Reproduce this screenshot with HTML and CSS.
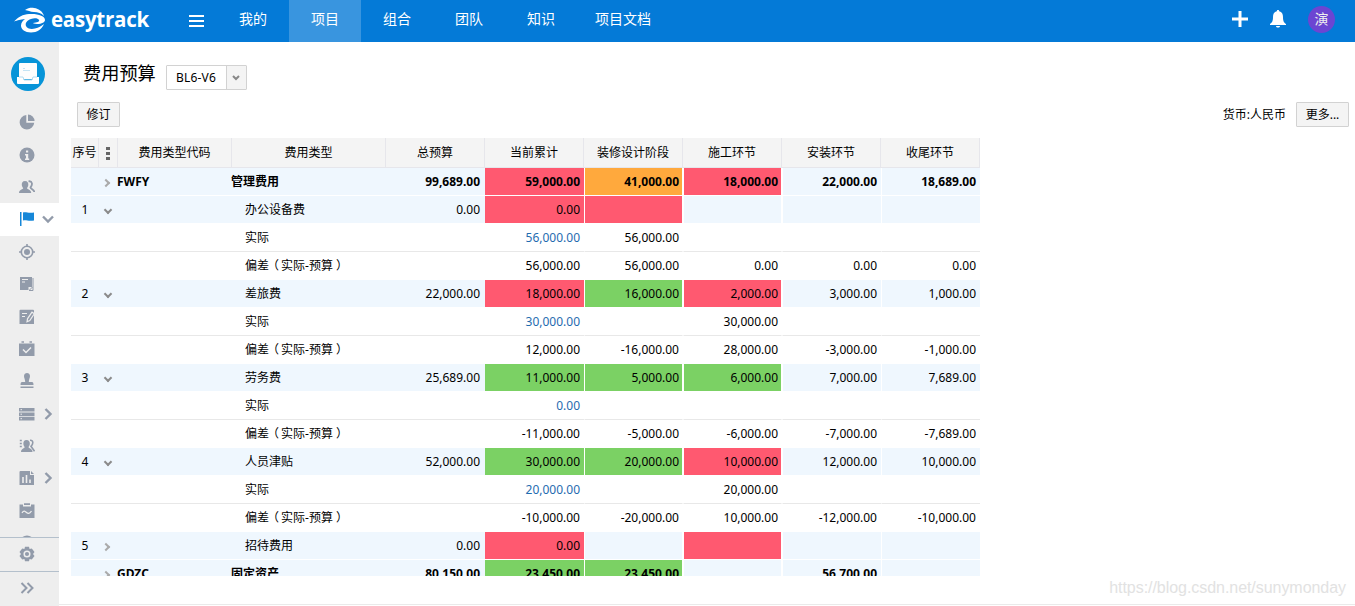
FILE: index.html
```html
<!DOCTYPE html>
<html lang="zh-CN">
<head>
  <meta charset="UTF-8">
  <meta name="viewport" content="width=device-width, initial-scale=1.0">
  <title>费用预算</title>
  <link rel="stylesheet" href="styles.css">
</head>
<body>
  <header class="topbar">
    <div class="logo">
      <svg width="33" height="26" viewBox="0 0 33 26" fill="#fff">
        <path d="M11 3C14 1 17 .6 20 1c5 .6 9 4 10 8-3-3-6-4-10-4-4-.2-6-1.500-9-2z"/>
        <path d="M0 14.500C4 10 9 7.300 15 7c9-.6 16 2 16 6 0 2-3 4-8 4-3 0-4-1-4-1 4-.3 7-1.500 6-3-1-2-5-2-8-1-4 1.500-6 4-5 7 1 2.500 5 3.500 9 2.500 4-.8 6-2.500 9-4.500-2 5-7 8.500-13 8.500-6 0-10-3-10-7 0-3 2-5 4-6.500-5 .3-7 1.500-11 2.500z"/>
      </svg>
      <span class="logo-text">easytrack</span>
    </div>
    <svg class="menu-icon" width="15" height="12" viewBox="0 0 15 12"><path d="M0 1h15M0 6h15M0 11h15" stroke="#fff" stroke-width="2"/></svg>
    <nav class="nav">
      <a href="#">我的</a>
      <a href="#" class="active">项目</a>
      <a href="#">组合</a>
      <a href="#">团队</a>
      <a href="#">知识</a>
      <a href="#" class="wide">项目文档</a>
    </nav>
    <div class="tools">
      <svg width="16" height="16" viewBox="0 0 16 16"><path d="M8 0v16M0 8h16" stroke="#fff" stroke-width="3"/></svg>
      <svg width="16" height="18" viewBox="0 0 16 18" fill="#fff"><path d="M8 0c1 0 1 .6 1.200 1.200C12 2 13 4 13 7c0 4 .8 5.500 3 7v1H0v-1c2.200-1.500 3-3 3-7 0-3 1-5 3.800-5.800C7 .6 7 0 8 0zM6 16h4c0 1.200-1 1.600-2 1.600s-2-.4-2-1.600z"/></svg>
      <span class="avatar">演</span>
    </div>
  </header>

  <div class="layout">
    <aside class="sidebar">
      <div class="project-icon">
        <svg width="22" height="22" viewBox="0 0 22 22">
          <path d="M3 0h16a1 1 0 0 1 1 1v15H2V1a1 1 0 0 1 1-1z" fill="#fdfdfd"/>
          <path d="M6 5.500h2M6 7.500h7" fill="none" stroke="#c5e4f4"/>
          <path d="M0 14h6l1 3h8l1-3h6v6a1 1 0 0 1-1 1H1a1 1 0 0 1-1-1z" fill="#fff"/>
          <path d="M2 14h4l1 3h8l1-3h4" fill="none" stroke="#b5dcf0"/>
        </svg>
      </div>
      <ul class="side-menu">
        <li><svg viewBox="0 0 16 16"><path d="M7.300 1v7.700h7.900A7.300 7.300 0 1 1 7.300 1z"/><path d="M9 .4A7 7 0 0 1 15.600 7H9z"/></svg></li>
        <li><svg viewBox="0 0 16 16"><circle cx="8" cy="8" r="7.500"/><path d="M7 3.500h2.200v2H7zM6 7h3.200v4.500h1V13H6v-1.500h1v-3H6z" fill="#eee"/></svg></li>
        <li><svg viewBox="0 0 16 16"><path d="M6 2c2.500 0 3.500 1.700 3.300 4-.1 1.500-.8 2.300-1.300 3 0 1.500 4.200 1.600 4.200 5H0c0-3.400 4.200-3.500 4.200-5C3.500 8.300 3 7.500 2.800 6 2.600 3.700 3.500 2 6 2z"/><path d="M9.500 2.300c4-.6 4.300 3.500 2 6 .2 1.900 3.500 2 3.800 4.700" fill="none" stroke="#929baa" stroke-width="1.800"/></svg></li>
        <li class="active"><svg viewBox="0 0 16 16"><path d="M1 1h1.500v14H1zM4 1.500c3-1.200 5 1.200 11 0v8c-6 1.200-8-1.200-11 0z"/></svg><svg class="arrow" viewBox="0 0 12 12"><path d="M1 3.500l5 5 5-5"/></svg></li>
        <li><svg viewBox="0 0 16 16"><circle cx="8" cy="8" r="5.700" fill="none" stroke="#929baa" stroke-width="1.600"/><circle cx="8" cy="8" r="3"/><path d="M7.200 0h1.600v3H7.200zM7.200 13h1.600v3H7.200zM0 7.200h3v1.600H0zM13 7.200h3v1.600h-3z"/></svg></li>
        <li><svg viewBox="0 0 16 16"><path d="M1 1h12v10H9.500v3H1z"/><path d="M14 2v12.500h-4M10.500 14l3-3" fill="none" stroke="#929baa"/><path d="M3 3.500h6M3 6h3" stroke="#eee" stroke-width="1.200"/></svg></li>
        <li><svg viewBox="0 0 16 16"><path d="M1.500.8h12.500a1 1 0 0 1 1 1V15H.5V1.800a1 1 0 0 1 1-1z"/><path d="M3 4.500h5M3 7.500h3" stroke="#eee" stroke-width="1.200"/><path d="M8 12.800l.5-3L13 3.200l2.300 1.600-4.500 6.700z" fill="#929baa" stroke="#eee" stroke-width="1.200"/></svg></li>
        <li><svg viewBox="0 0 16 16"><path d="M0 2.500h15.500V15H0zM2.500.3H5v1.400H2.500zM10.500.3H13v1.400h-2.500z"/><path d="M4 8.500l3 3 5-5" fill="none" stroke="#eee" stroke-width="1.500"/></svg></li>
        <li><svg viewBox="0 0 16 16"><path d="M5 3c0-4 6-4 6 0 0 2.500-1.200 3-1.200 6H13c1 0 1.500 1 1.500 3h-13c0-2 .5-3 1.500-3h3.200C6.200 6 5 5.500 5 3zM1.500 13.500h13V15h-13z"/></svg></li>
        <li><svg viewBox="0 0 16 16"><path d="M0 2h15.500v3.600H0zM0 6.400h15.500V10H0zM0 10.800h15.500v3.600H0z"/><path d="M1.500 3.700h1.500M1.500 8.200h1.500M1.500 12.700h1.500" stroke="#eee"/></svg><svg class="arrow" viewBox="0 0 12 12"><path d="M3.500 1l5 5-5 5"/></svg></li>
        <li><svg viewBox="0 0 16 16"><path d="M7.500 2c2.500 0 3.500 1.700 3.300 4-.1 1.500-.8 2.300-1.300 3 0 1.500 4 1.600 4 5H2c0-3.400 3.700-3.500 3.700-5-.6-.7-1.200-1.500-1.300-3C4.200 3.700 5 2 7.500 2z"/><path d="M11 2.300c3.500-.3 3.500 3.500 1 6l3.500 5M.8 2.500h2M.8 5.500h2M.8 8.500h2" fill="none" stroke="#929baa" stroke-width="1.600"/></svg></li>
        <li><svg viewBox="0 0 16 16"><path d="M1.500 1H11v4h4v10H.5V2a1 1 0 0 1 1-1zM12 1l3 3h-3z"/><path d="M4 7v6M7.500 5v8M11 9.500V13" stroke="#eee" stroke-width="1.600"/></svg><svg class="arrow" viewBox="0 0 12 12"><path d="M3.500 1l5 5-5 5"/></svg></li>
        <li><svg viewBox="0 0 16 16"><path d="M.5 1.500H4v2h8v-2h3.500V15H.5zM5 .3h6V2H5z"/><path d="M3 9.800c2-3 3.200-1.500 4.500-.3s2.700 1.800 5-1.500" fill="none" stroke="#eee" stroke-width="1.300"/></svg></li>
        <li><svg viewBox="0 0 16 16"><circle cx="8" cy="8" r="7.500"/></svg></li>
      </ul>
      <div class="side-foot">
        <svg viewBox="0 0 16 16"><path d="M6 .8h4l.6 2.200 2.200-.6L15.500 6 14 8l1.500 2-2.700 3.600-2.200-.6-.6 2.200H6L5.400 13l-2.200.6L.5 10 2 8 .5 6l2.700-3.600 2.200.6z"/><circle cx="8" cy="8" r="2.800" fill="#929baa" stroke="#eee" stroke-width="1.500"/></svg>
      </div>
      <div class="side-foot">
        <svg viewBox="0 0 16 16"><path d="M2.500 3l5 5-5 5M8.500 3l5 5-5 5" fill="none" stroke="#929baa" stroke-width="2"/></svg>
      </div>
    </aside>

    <main class="content">
      <div class="title-row">
        <h1>费用预算</h1>
        <div class="select">
          <span>BL6-V6</span>
          <i><svg width="8" height="6" viewBox="0 0 8 6"><path d="M1 1l3 3 3-3" fill="none" stroke="#888" stroke-width="2"/></svg></i>
        </div>
      </div>
      <div class="toolbar">
        <button class="btn">修订</button>
        <span class="currency">货币:人民币</span>
        <button class="btn more">更多...</button>
      </div>

      <div class="grid-wrap">
        <table class="grid">
          <colgroup>
            <col class="c-no"><col class="c-exp"><col class="c-code"><col class="c-type">
            <col class="c-num"><col class="c-num"><col class="c-num"><col class="c-num"><col class="c-num"><col class="c-num">
          </colgroup>
          <thead>
            <tr><th>序号</th><th><svg width="4" height="13" viewBox="0 0 4 13"><path d="M0 0h4v3H0zM0 5h4v3H0zM0 10h4v3H0z" fill="#666"/></svg></th><th>费用类型代码</th><th>费用类型</th><th>总预算</th><th>当前累计</th><th>装修设计阶段</th><th>施工环节</th><th>安装环节</th><th>收尾环节</th></tr>
          </thead>
          <tbody>
            <tr class="budget group"><td></td><td><i class="chev right"></i></td><td>FWFY</td><td>管理费用</td><td>99,689.00</td><td class="red">59,000.00</td><td class="orange">41,000.00</td><td class="red">18,000.00</td><td>22,000.00</td><td>18,689.00</td></tr>

            <tr class="budget"><td>1</td><td><i class="chev"></i></td><td></td><td>办公设备费</td><td>0.00</td><td class="red">0.00</td><td class="red"></td><td></td><td></td><td></td></tr>
            <tr class="actual"><td></td><td></td><td></td><td>实际</td><td></td><td><a href="#">56,000.00</a></td><td>56,000.00</td><td></td><td></td><td></td></tr>
            <tr><td></td><td></td><td></td><td>偏差<b class="open">（</b>实际-预算<b class="close">）</b></td><td></td><td>56,000.00</td><td>56,000.00</td><td>0.00</td><td>0.00</td><td>0.00</td></tr>

            <tr class="budget"><td>2</td><td><i class="chev"></i></td><td></td><td>差旅费</td><td>22,000.00</td><td class="red">18,000.00</td><td class="green">16,000.00</td><td class="red">2,000.00</td><td>3,000.00</td><td>1,000.00</td></tr>
            <tr class="actual"><td></td><td></td><td></td><td>实际</td><td></td><td><a href="#">30,000.00</a></td><td></td><td>30,000.00</td><td></td><td></td></tr>
            <tr><td></td><td></td><td></td><td>偏差<b class="open">（</b>实际-预算<b class="close">）</b></td><td></td><td>12,000.00</td><td>-16,000.00</td><td>28,000.00</td><td>-3,000.00</td><td>-1,000.00</td></tr>

            <tr class="budget"><td>3</td><td><i class="chev"></i></td><td></td><td>劳务费</td><td>25,689.00</td><td class="green">11,000.00</td><td class="green">5,000.00</td><td class="green">6,000.00</td><td>7,000.00</td><td>7,689.00</td></tr>
            <tr class="actual"><td></td><td></td><td></td><td>实际</td><td></td><td><a href="#">0.00</a></td><td></td><td></td><td></td><td></td></tr>
            <tr><td></td><td></td><td></td><td>偏差<b class="open">（</b>实际-预算<b class="close">）</b></td><td></td><td>-11,000.00</td><td>-5,000.00</td><td>-6,000.00</td><td>-7,000.00</td><td>-7,689.00</td></tr>

            <tr class="budget"><td>4</td><td><i class="chev"></i></td><td></td><td>人员津贴</td><td>52,000.00</td><td class="green">30,000.00</td><td class="green">20,000.00</td><td class="red">10,000.00</td><td>12,000.00</td><td>10,000.00</td></tr>
            <tr class="actual"><td></td><td></td><td></td><td>实际</td><td></td><td><a href="#">20,000.00</a></td><td></td><td>20,000.00</td><td></td><td></td></tr>
            <tr><td></td><td></td><td></td><td>偏差<b class="open">（</b>实际-预算<b class="close">）</b></td><td></td><td>-10,000.00</td><td>-20,000.00</td><td>10,000.00</td><td>-12,000.00</td><td>-10,000.00</td></tr>

            <tr class="budget"><td>5</td><td><i class="chev right"></i></td><td></td><td>招待费用</td><td>0.00</td><td class="red">0.00</td><td></td><td class="red"></td><td></td><td></td></tr>
            <tr class="budget group"><td></td><td><i class="chev right"></i></td><td>GDZC</td><td>固定资产</td><td>80,150.00</td><td class="green">23,450.00</td><td class="green">23,450.00</td><td></td><td>56,700.00</td><td></td></tr>
          </tbody>
        </table>
      </div>
      <div class="watermark">https://blog.csdn.net/sunymonday</div>
    </main>
  </div>
</body>
</html>
```
FILE: styles.css
```css
* {
  box-sizing: border-box;
}
body {
  margin: 0;
  height: 606px;
  overflow: hidden;
  font-family: "Noto Sans", "Noto Sans CJK SC", sans-serif;
  font-size: 12px;
  color: #000;
  background: #fff;
}
a {
  text-decoration: none;
}

/* top bar */
.topbar {
  display: flex;
  align-items: center;
  height: 42px;
  background: #047ad7;
  color: #fff;
}
.logo {
  display: flex;
  align-items: center;
  width: 188px;
  height: 42px;
  padding-left: 14px;
}
.logo svg {
  margin-top: -2px;
}
.logo-text {
  margin: -5px 0 0 4px;
  font-family: "Open Sans", sans-serif;
  font-size: 20.5px;
  font-weight: 700;
  letter-spacing: -0.25px;
  line-height: 30px;
}
.menu-icon {
  margin-left: 1px;
}
.nav {
  display: flex;
  margin-left: 13px;
}
.nav a {
  width: 72px;
  height: 42px;
  line-height: 38px;
  font-size: 14px;
  text-align: center;
  color: #fff;
}
.nav a.active {
  background: #3995df;
}
.nav a.wide {
  width: 92px;
}
.tools {
  display: flex;
  align-items: center;
  gap: 22px;
  margin: -4px 20px 0 auto;
}
.avatar {
  width: 27px;
  height: 27px;
  border-radius: 50%;
  background: #6c45d2;
  color: #eee;
  font-size: 14px;
  line-height: 26px;
  text-align: center;
}

/* left menu */
.layout {
  display: flex;
  height: 564px;
}
.sidebar {
  display: flex;
  flex-direction: column;
  width: 59px;
  background: #eee;
}
.sidebar svg {
  display: block;
  fill: #929baa;
}
.project-icon {
  display: flex;
  flex: none;
  align-items: center;
  justify-content: center;
  width: 34px;
  height: 34px;
  margin: 15px 0 15px 11px;
  border-radius: 50%;
  background: #0794d8;
}
.side-menu {
  flex: 1;
  min-height: 0;
  margin: 0;
  padding: 0;
  overflow: hidden;
  list-style: none;
}
.side-menu li {
  display: flex;
  align-items: center;
  height: 32.4px;
  padding-left: 19px;
}
.side-menu li.active {
  background: #fff;
}
.side-menu li.active svg:first-child {
  fill: #1787d8;
}
.side-menu svg,
.side-foot svg {
  width: 16px;
  height: 16px;
}
.side-menu svg.arrow {
  width: 12px;
  height: 12px;
  margin-left: 7px;
  fill: none;
  stroke: #929baa;
  stroke-width: 2.4;
}
.side-foot {
  display: flex;
  flex: none;
  align-items: center;
  height: 34px;
  padding: 0 0 2px 19px;
  border-top: 1px solid #b4c0cc;
}
.side-foot:last-child {
  height: 35px;
}

/* page */
.content {
  position: relative;
  flex: 1;
  height: 563px;
  border-bottom: 1px solid #eaeaea;
}
.title-row {
  display: flex;
  height: 60px;
  padding: 23px 0 0 24px;
}
h1 {
  width: 83px;
  margin: -5px 0 0;
  font-size: 18.2px;
  font-weight: normal;
  line-height: 26px;
}
.select {
  display: flex;
  width: 81px;
  height: 25px;
  border: 1px solid #d2d2d2;
  border-radius: 1px;
  line-height: 23px;
}
.select span {
  flex: 1;
  padding-left: 9px;
  letter-spacing: 0.2px;
}
.select i {
  display: flex;
  align-items: center;
  justify-content: center;
  width: 20px;
  padding-right: 1px;
  border-left: 1px solid #d2d2d2;
  background: #f4f4f4;
}
.toolbar {
  display: flex;
  align-items: center;
  height: 25px;
  padding: 0 6px 0 18px;
}
.btn {
  width: 43px;
  height: 25px;
  padding: 1px 0 0;
  border: 1px solid #d2d2d2;
  border-radius: 1px;
  background: #f4f4f4;
  font: inherit;
  line-height: 22px;
  color: #000;
}
.btn.more {
  width: 53px;
}
.currency {
  margin: -2px 10px 0 auto;
}

/* budget table */
.grid-wrap {
  width: 910px;
  height: 438px;
  margin: 11px 0 0 12px;
  overflow: hidden;
}
.grid {
  width: 909px;
  table-layout: fixed;
  border-spacing: 0;
}
.c-no { width: 28px; }
.c-exp { width: 19px; }
.c-code { width: 114px; }
.c-type { width: 154px; }
.c-num { width: 99px; }

.grid th {
  height: 30px;
  padding: 0;
  border-right: 1px solid #e6e6eb;
  border-bottom: 1px solid #e6e6eb;
  background: #f4f4f4;
  font-weight: normal;
  line-height: 29px;
  white-space: nowrap;
}
.grid th:nth-child(-n+4) {
  padding-top: 1px;
  line-height: 28px;
}
.grid th svg {
  display: block;
  margin: 0 auto;
}
.grid td {
  height: 28px;
  padding: 0 4px 0 0;
  border-bottom: 1px solid #fff;
  line-height: 27px;
  text-align: right;
  white-space: nowrap;
}
.grid td:nth-child(1) {
  padding: 0;
  text-align: center;
}
.grid td:nth-child(2) {
  padding: 0;
}
.grid td:nth-child(3) {
  padding: 0;
  text-align: left;
  text-indent: -1px;
}
.grid td:nth-child(4) {
  padding: 0 0 0 13px;
  text-align: left;
}
.grid td:nth-child(5) {
  padding-right: 5px;
}
.grid td:nth-child(n+7) {
  border-left: 1px solid #fff;
}
.grid td:nth-child(7),
.grid td:nth-child(8) {
  padding-right: 3px;
  border-right: 1px solid #fff;
}
.grid .budget td {
  background: #eff7fe;
}
.grid .actual td {
  border-bottom-color: #e8e8e8;
}
.grid .group td {
  font-weight: bold;
}
.grid .group td:nth-child(4) {
  padding-left: 0;
  text-indent: -1px;
}
.grid .budget .red {
  background: #ff5970;
}
.grid .budget .orange {
  background: #ffa93d;
}
.grid .budget .green {
  background: #7bd164;
}
.grid a {
  color: #1f6cb0;
}
.open,
.close {
  font-weight: normal;
}
.open {
  margin: 0 2px 0 -2px;
}
.close {
  margin-left: 3px;
}
.chev {
  display: block;
  width: 6px;
  height: 6px;
  margin: 0 0 0 6px;
  border: solid #8b8b8b;
  border-width: 0 2px 2px 0;
  transform: rotate(45deg);
}
.chev.right {
  margin: 3px 0 0 4px;
  border-color: #aaa;
  transform: rotate(-45deg);
}

.watermark {
  position: absolute;
  right: 9px;
  bottom: 6px;
  font-family: "Liberation Sans", sans-serif;
  font-size: 16px;
  letter-spacing: -0.05px;
  line-height: 20px;
  color: #e2e2e2;
}
```
